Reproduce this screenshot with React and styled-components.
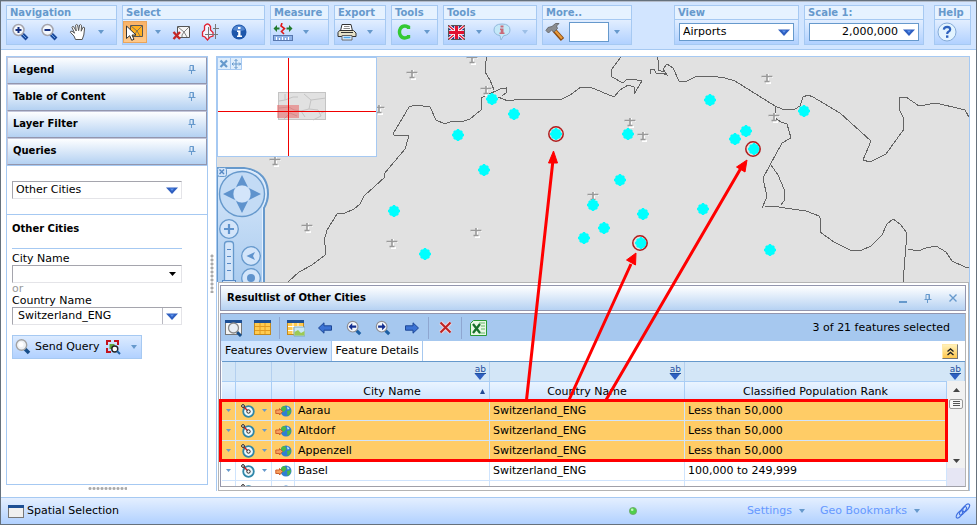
import React, { useState } from "react";
import styled, { createGlobalStyle } from "styled-components";

const GlobalStyle = createGlobalStyle`
  * {
    box-sizing: border-box;
  }
  body {
    margin: 0;
    font-family: "DejaVu Sans", Verdana, sans-serif;
    font-size: 11px;
    line-height: 14px;
    color: #000;
  }
  button, input, select {
    font: inherit;
    color: inherit;
    padding: 0;
    margin: 0;
    border-radius: 0;
  }
  svg {
    display: block;
    flex: none;
  }
`;

const Page = styled.div`
  min-height: 100vh;
  display: flex;
  flex-direction: column;
  background: #fff;
  border: 1px solid #66717c;
`;

/* ---------- top toolbar ---------- */

const Toolbar = styled.header`
  display: flex;
  gap: 5px;
  padding: 3px 5px 4px;
  background: #d2e5ff;
  border-top: 1px solid #b4bcca;
  border-bottom: 1px solid #a6c9f2;
`;
const Group = styled.section`
  min-width: ${(p) => p.$width}px;
  border: 1px solid #a6c9f2;
  margin-left: ${(p) => p.$push || "0"};
`;
const GroupTitle = styled.h2`
  display: block;
  margin: 0;
  padding: 0 3px;
  font-size: 10px;
  font-weight: bold;
  line-height: 13px;
  color: #6699cc;
  background: #e6f2ff;
  border-bottom: 1px solid #a6c9f2;
  white-space: nowrap;
`;
const Tools = styled.div`
  display: flex;
  align-items: center;
  gap: ${(p) => p.$gap || "5px"};
  height: 24px;
  padding: ${(p) => p.$pad || "0"};
  background: linear-gradient(#e2eeff, #b1d1ff);
`;
const ToolButton = styled.button`
  width: 24px;
  height: 22px;
  display: flex;
  align-items: center;
  justify-content: center;
  cursor: pointer;
  border: 1px solid ${(p) => (p.$active ? "#eaa55a" : "transparent")};
  background: ${(p) =>
    p.$active ? "linear-gradient(#f9b267, #ffc98a)" : "none"};
`;
const ArrowButton = styled.button`
  width: 12px;
  height: 22px;
  display: flex;
  align-items: center;
  justify-content: center;
  border: none;
  background: none;
  cursor: pointer;
  opacity: ${(p) => (p.disabled ? 0.45 : 1)};
`;
const MoreInput = styled.input`
  width: 40px;
  height: 20px;
  border: 1px solid #6699cc;
  background: #fff;
`;

/* ---------- drop downs ---------- */

const SelectBox = styled.span`
  position: relative;
  display: block;
  width: 100%;
  height: 18px;
  border: 1px solid #6699cc;
  background: #fff;
  ${(p) =>
    p.$inset &&
    `
    border-color: #a5a5ad #e4e4e8 #e4e4e8 #a5a5ad;
  `}
  select {
    appearance: none;
    display: block;
    width: 100%;
    height: 100%;
    border: none;
    background: transparent;
    padding: 0 20px 0 ${(p) => p.$indent || "3px"};
    text-align: ${(p) => p.$align || "left"};
    text-align-last: ${(p) => p.$align || "left"};
  }
`;
const SelectMark = styled.span`
  position: absolute;
  top: 0;
  right: 0;
  bottom: 0;
  width: 19px;
  display: flex;
  align-items: center;
  justify-content: center;
  pointer-events: none;
  border-left: 1px solid ${(p) => (p.$split ? "#b9b9c2" : "transparent")};
`;

/* ---------- middle ---------- */

const Main = styled.main`
  flex: 1;
  display: grid;
  grid-template-columns: 202px 8px 1fr;
  padding: 6px 6px 6px 5px;
`;
const SideColumn = styled.div`
  display: flex;
  flex-direction: column;
`;
const Sidebar = styled.aside`
  flex: 1;
  border: 1px solid #a6c9f2;
`;
const PanelButton = styled.button`
  display: flex;
  align-items: center;
  justify-content: space-between;
  width: 100%;
  height: 27px;
  padding: 0 10px 2px 5px;
  font-size: 10px;
  font-weight: bold;
  border: 1px solid;
  border-color: #c3c6da #9396ae #9396ae #c3c6da;
  background: linear-gradient(#fdfeff, #b4d1f2);
`;
const QueryBox = styled.div`
  padding: 15px 25px 15px 5px;
  border-top: 1px solid #a6c9f2;
`;
const QueryTitle = styled.h3`
  margin: -8px 0 4px;
  padding-bottom: 12px;
  font-size: 10px;
  line-height: 14px;
  border-bottom: 1px solid #a6c9f2;
`;
const Field = styled.label`
  display: block;
  line-height: 12px;
`;
const Or = styled.div`
  line-height: 12px;
  color: #999;
`;
const SendBar = styled.div`
  display: flex;
  align-items: center;
  justify-content: space-between;
  width: 130px;
  height: 24px;
  margin-top: 10px;
  padding: 0 1px 0 2px;
  border: 1px solid #a6c9f2;
  background: linear-gradient(#dcebff, #b1d1ff);
`;
const SendButton = styled.button`
  display: flex;
  align-items: center;
  gap: 4px;
  height: 22px;
  border: none;
  background: none;
  white-space: nowrap;
`;
const SideGrip = styled.div`
  height: 5px;
  width: 39px;
  margin: 1px auto 0;
  background: radial-gradient(circle, #aaa 1px, transparent 2px) 0 0 / 4px 5px;
`;
const ColumnGrip = styled.div`
  align-self: center;
  justify-self: center;
  width: 4px;
  height: 39px;
  background: radial-gradient(circle, #aaa 1px, transparent 2px) 0 0 / 4px 4px;
`;

/* ---------- map ---------- */

const MapPane = styled.div`
  position: relative;
  display: flex;
  flex-direction: column;
  border: 1px solid #a6c9f2;
  border-bottom: none;
`;
const MapArea = styled.div`
  position: relative;
  flex: 1;
  min-height: 225px;
  overflow: hidden;
  background: #e1e1e1;
`;
const Layer = styled.svg`
  position: absolute;
  inset: 0;
  width: 100%;
  height: 100%;
  pointer-events: none;
`;
const Overview = styled.div`
  position: absolute;
  top: 0;
  left: 0;
  width: 160px;
  height: 100px;
  border: 1px solid #a6c9f2;
  background: #fff;
`;
const NavControl = styled.div`
  position: absolute;
  top: 110px;
  left: 0;
`;

/* ---------- result list ---------- */

const ResultWindow = styled.section`
  margin-left: 1px;
  padding: 2px 2px 3px 1px;
  background: #fff;
  border: 1px solid #b4b4b4;
`;
const ResultHeader = styled.div`
  display: flex;
  align-items: center;
  justify-content: space-between;
  height: 26px;
  padding: 0 2px 0 6px;
  border: 1px solid #9396ae;
  background: linear-gradient(#fff, #b6d2f3);
`;
const ResultTitle = styled.h2`
  margin: 0;
  font-size: 10px;
`;
const WindowButtons = styled.div`
  display: flex;
  gap: 5px;
`;
const WindowButton = styled.button`
  width: 20px;
  height: 20px;
  display: flex;
  align-items: center;
  justify-content: center;
  border: none;
  background: none;
`;
const ResultBody = styled.div`
  margin-top: 2px;
  border: 1px solid;
  border-color: #9396ae #b4b4b4 #a0a0a8 #9396ae;
`;
const ResultTools = styled.div`
  display: flex;
  align-items: center;
  gap: 5px;
  height: 27px;
  padding-left: 1px;
  background: #a6c8ef;
`;
const Separator = styled.span`
  width: 1px;
  height: 22px;
  margin: 0 -1px;
  background: #8ea6d0;
`;
const Selected = styled.span`
  margin-left: auto;
  padding-right: 15px;
`;
const TabBar = styled.div`
  display: flex;
  height: 20px;
`;
const Tab = styled.button`
  height: 20px;
  padding: 0 3px 0 4px;
  border: none;
  border-right: 1px solid #a6c8ef;
  background: ${(p) => (p.$active ? "#fff" : "#d2e6ff")};
`;
const CollapseButton = styled.button`
  width: 16px;
  height: 15px;
  margin: 3px 7px 0 auto;
  display: flex;
  align-items: center;
  justify-content: center;
  border: 1px solid;
  border-color: #ffe9a8 #777 #777 #ffe9a8;
  background: linear-gradient(#fff0b8, #ffc84e);
`;
const FilterRow = styled.div`
  display: grid;
  grid-template-columns: 14px 36px 23px 195px 195px 1fr;
  height: 20px;
  margin-left: 1px;
  border-top: 1px solid #6699cc;
  background: #d3e6f7;
`;
const FilterCell = styled.div`
  display: flex;
  align-items: center;
  justify-content: flex-end;
  padding-right: 3px;
  border-right: 1px solid #b4d0ef;
`;
const FilterButton = styled.button`
  display: flex;
  flex-direction: column;
  align-items: center;
  border: none;
  background: none;
  font-size: 9px;
  line-height: 10px;
  color: #1f4f9c;
  text-decoration: underline;
`;
const Grid = styled.div`
  display: flex;
  height: 105px;
  margin-left: 1px;
  overflow: hidden;
`;
const Table = styled.table`
  flex: 1;
  align-self: flex-start;
  width: 100%;
  table-layout: fixed;
  border-collapse: separate;
  border-spacing: 0;
`;
const Th = styled.th`
  width: ${(p) => p.$width || "auto"};
  height: 20px;
  padding: 0;
  font-weight: normal;
  border: solid #a9cdf5;
  border-width: 1px 1px 0 0;
  background: linear-gradient(#eaf4ff, #cbe3ff);
`;
const HeadLabel = styled.span`
  display: flex;
  align-items: center;
  justify-content: center;
  position: relative;
`;
const SortMark = styled.svg`
  position: absolute;
  right: 4px;
`;
const Td = styled.td`
  height: 20px;
  padding: 0 0 0 ${(p) => (p.$icon ? "0" : "3px")};
  white-space: nowrap;
  border: solid #cfe4fd;
  border-width: 0 1px 1px 0;
  background: ${(p) => (p.$selected ? "#ffcc66" : "#fff")};
`;
const IconCell = styled.div`
  display: flex;
  align-items: center;
  justify-content: center;
  gap: 7px;
`;
const ScrollColumn = styled.div`
  width: 18px;
  background: #e6e6f4;
`;
const ScrollTrack = styled.div`
  display: flex;
  flex-direction: column;
  align-items: center;
  height: 87px;
  padding: 7px 0 5px;
  background: #f1f1f1;
`;
const ScrollThumb = styled.div`
  width: 14px;
  height: 10px;
  margin: 7px 0 auto;
  display: flex;
  align-items: center;
  justify-content: center;
  border: 1px solid #999;
  border-radius: 2px;
  background: #f7f7f7;
`;

/* ---------- status bar ---------- */

const StatusBar = styled.footer`
  display: flex;
  align-items: center;
  height: 27px;
  padding: 0 5px 0 7px;
  border-top: 1px solid #a6c9f2;
  background: linear-gradient(#e4efff, #b1d1ff);
`;
const StatusText = styled.span`
  flex: 9 1 0;
  padding-left: 3px;
`;
const StatusRight = styled.div`
  flex: 5 1 0;
  display: flex;
  align-items: center;
  justify-content: flex-end;
  gap: 15px;
`;
const StatusButton = styled.button`
  display: flex;
  align-items: center;
  gap: 7px;
  border: none;
  background: none;
  color: #6699ff;
  white-space: nowrap;
`;
const LinkButton = styled(StatusButton)`
  margin-left: 20px;
`;

/* ---------- icons ---------- */

const Down = ({ color = "#6699cc", w = 6, h = 4 }) => (
  <svg width={w} height={h} viewBox="0 0 10 6" preserveAspectRatio="none">
    <path d="M0 0H10L5 6Z" fill={color} />
  </svg>
);

const BigDown = () => (
  <svg width="12" height="7" viewBox="0 0 12 7">
    <path d="M0 0.5H12L6 7Z" fill="#2f5fc0" />
    <path d="M4 1.5H8L6 4Z" fill="#5d94ee" />
  </svg>
);

const Zoom = ({ plus, size = 18 }) => (
  <svg width={size} height={size} viewBox="0 0 18 18">
    <path d="M10 10L16 16" stroke="#1c4a9c" strokeWidth="4" />
    <path d="M10 10L15 15" stroke="#68a5e8" strokeWidth="1" />
    <circle cx="7.5" cy="7" r="5.5" fill="#f3f7fc" stroke="#a5a5ad" strokeWidth="1.5" />
    <path d="M4.5 7H10.5" stroke="#152f80" strokeWidth="2" />
    {plus && <path d="M7.5 4V10" stroke="#152f80" strokeWidth="2" />}
  </svg>
);

const Lens = () => (
  <svg width="16" height="16" viewBox="0 0 16 16">
    <path d="M10 10L14 14" stroke="#164d88" strokeWidth="3.5" />
    <circle cx="6.5" cy="6" r="5.2" fill="#eef1f4" stroke="#a2a2a2" strokeWidth="1.4" />
    <circle cx="6" cy="5.4" r="2.5" fill="#fff" />
  </svg>
);

const Hand = () => (
  <svg width="18" height="18" viewBox="0 0 18 18">
    <path
      d="M6.5 16.5L5 13L1.3 9.2Q1.5 7.8 3 8.2L5.6 10.2L3 4.5Q3.2 3 4.6 3.6L7.2 8L6.6 2.2Q7.4 0.8 8.6 2L9.6 7.6L10.6 2Q11.8 1 12.5 2.4L12.2 8.2L13.9 4.4Q15.2 3.6 15.6 5L14.8 12L13.2 16.5Z"
      fill="#fff"
      stroke="#555"
    />
  </svg>
);

const MapSheet = ({ fill }) => (
  <>
    <path d="M5.5 2.5H17.5V13.5H5.5Z" fill={fill} stroke="#555" />
    <path d="M6 3L12 8L17 3M12 8L10 11V13M12 8L15 13" fill="none" stroke="#666" strokeWidth="0.8" />
  </>
);

const SelectIcon = () => (
  <svg width="20" height="18" viewBox="0 0 20 18">
    <MapSheet fill="#ffb020" />
    <path d="M1.5 3L1.5 15.5L4.7 12.7L6.7 17.3L9 16.3L7 12H11Z" fill="#fff" stroke="#333" />
  </svg>
);

const UnselectIcon = () => (
  <svg width="18" height="16" viewBox="0 0 18 16">
    <MapSheet fill="#f6f6f6" />
    <path d="M1.5 8L8 15M8 8L1.5 15" stroke="#c42828" strokeWidth="2.4" />
  </svg>
);

const ShapeIcon = () => (
  <svg width="18" height="18" viewBox="0 0 18 18">
    <path
      d="M5 1.5Q6.5 0.5 8 1.5L9.5 3.5V7L12 9.5V13L9 14L6.5 17L4 14L1.5 13V9L3.5 7V3Z"
      fill="#f3f3ff"
      stroke="#e02030"
      strokeWidth="1.3"
    />
    <path d="M4 11.5H16M7.5 4V15M14.5 1V16M12 5.5H18M12 11.5H17" stroke="#777" />
  </svg>
);

const InfoIcon = () => (
  <svg width="16" height="16" viewBox="0 0 16 16">
    <circle cx="8" cy="8" r="7.5" fill="#1e57ab" />
    <path d="M2 6Q3 1.5 8 1.5Q13 1.5 14 6Q8 8 2 6Z" fill="#6a9ae0" opacity="0.7" />
    <path d="M7 3H9.5V5H7ZM6 6.5H9.5V11.5H11V13H6V11.5H7.2V8H6Z" fill="#fff" />
  </svg>
);

const MeasureIcon = () => (
  <svg width="20" height="18" viewBox="0 0 20 18">
    <path d="M0.5 5.5L4 2V4.5H6.5V6.5H4V9ZM19.5 5.5L16 2V4.5H13.5V6.5H16V9Z" fill="#217a2b" />
    <path d="M9 0L8 3L11.5 5.5L8.5 8.5L11 11" fill="none" stroke="#e01818" strokeWidth="1.6" />
    <rect x="0.5" y="12.5" width="19" height="5" fill="#8fb2e8" stroke="#5878ae" />
    <path d="M3.5 14V17M6.5 15V17M9.5 14V17M12.5 15V17M15.5 14V17" stroke="#fff" />
  </svg>
);

const PrintIcon = () => (
  <svg width="20" height="18" viewBox="0 0 20 18">
    <path d="M5 1.5H14L15.5 8H3.5Z" fill="#fff" stroke="#333" />
    <path d="M7 3.5H12.5M6.5 5.5H13" stroke="#8a8a8a" />
    <path d="M2.5 7.5H16.5L19 10V13.5H1V9.5Z" fill="#e6e1c8" stroke="#333" />
    <path d="M4 9.5H16" stroke="#333" />
    <path d="M5 12.5H15V17H5Z" fill="#e5f2ff" stroke="#666" />
    <path d="M6.5 14.5H13.5" stroke="#4ba3e6" strokeWidth="1.5" />
  </svg>
);

const RefreshC = () => (
  <svg width="14" height="16" viewBox="0 0 14 16">
    <path d="M11.5 5V3Q6 0.5 3.4 4.5Q1.5 8 3.4 11.5Q6 15.5 11.5 13V11" fill="none" stroke="#33c933" strokeWidth="3.4" />
  </svg>
);

const FlagIcon = () => (
  <svg width="17" height="15" viewBox="0 0 17 15">
    <rect x="0.5" y="0.5" width="16" height="14" fill="#1f2b86" stroke="#555" />
    <path d="M1 1L16 14M16 1L1 14" stroke="#fff" strokeWidth="3" />
    <path d="M1 1L16 14M16 1L1 14" stroke="#e01030" strokeWidth="1.2" />
    <path d="M8.5 1V14M1 7.5H16" stroke="#fff" strokeWidth="4.4" />
    <path d="M8.5 1V14M1 7.5H16" stroke="#e01030" strokeWidth="3" />
  </svg>
);

const TipIcon = () => (
  <svg width="18" height="18" viewBox="0 0 18 18">
    <path d="M9 1Q17 1 17 7Q17 12 10.5 12.8L8 17L7 12.6Q1 11.5 1 7Q1 1 9 1Z" fill="#c4e8f8" stroke="#92b9dc" />
    <path d="M7.5 2.5H10.5V4.5H7.5ZM7 5.5H10.5V9.5H11.5V11H6.5V9.5H7.7V7H7Z" fill="#c96a78" />
  </svg>
);

const HammerIcon = () => (
  <svg width="20" height="20" viewBox="0 0 20 20">
    <path d="M9 8L17.5 17.5" stroke="#8a4a12" strokeWidth="4.4" />
    <path d="M9.5 8L17 16.5" stroke="#e79a3c" strokeWidth="2.2" />
    <path d="M1 8.5L3 5.5L7 4.5L10.5 1.5H14L11.5 4L12.5 6.5L9 10L6.5 8L3.5 11Z" fill="#8b8d90" stroke="#6a6c70" />
  </svg>
);

const HelpIcon = () => (
  <svg width="20" height="20" viewBox="0 0 20 20">
    <circle cx="10" cy="10" r="9" fill="#e3f4ff" stroke="#86abd8" />
    <path d="M6.8 7.6Q7.2 4.8 10.2 4.8Q13.2 5 13.2 7.4Q13.2 8.8 11.4 9.8Q10.2 10.5 10.2 12" fill="none" stroke="#2e62bd" strokeWidth="2.2" />
    <rect x="9" y="13.4" width="2.4" height="2.4" fill="#2e62bd" />
  </svg>
);

const Pin = () => (
  <svg width="8" height="9" viewBox="0 0 8 9">
    <path d="M2 5.5V0.5H5.5V5.5M5 0.5V5.5M0.5 5.5H7.5M3.5 6V9" fill="none" stroke="#6699cc" />
  </svg>
);

const TableIcon = ({ lens, chart }) => (
  <svg width="18" height="18" viewBox="0 0 18 18">
    <rect x="0.5" y="1.5" width="16" height="14" fill={lens ? "#f5f5f5" : "#ffcb50"} stroke={lens ? "#777" : "#c58a1c"} />
    <rect x="0" y="1" width="17" height="3" fill="#1d4f94" />
    {!lens && <path d="M1 7.5H16M1 11.5H16M6 4V15M11 4V15" stroke={chart ? "#fff" : "#e39a20"} />}
    {chart && <path d="M7 8H18V17H7Z" fill="#c9e7f6" stroke="#7fa9bd" />}
    {chart && <path d="M7.5 16.5V13L11 11L14 14L17.5 12V16.5Z" fill="#9cca55" />}
    {lens && <path d="M12 13L16 17" stroke="#164d88" strokeWidth="3" />}
    {lens && <circle cx="8.5" cy="9" r="5" fill="#e8eef5" stroke="#8a8a8a" strokeWidth="1.3" />}
  </svg>
);

const ArrowIcon = ({ right }) => (
  <svg width="14" height="12" viewBox="0 0 14 12">
    <path
      d={right ? "M13.5 6L8 0.8V3.8H0.5V8.2H8V11.2Z" : "M0.5 6L6 0.8V3.8H13.5V8.2H6V11.2Z"}
      fill="#3b72d4"
      stroke="#1d4796"
    />
  </svg>
);

const ZoomArrow = ({ right }) => (
  <svg width="16" height="16" viewBox="0 0 18 18">
    <path d="M11 11L16 16" stroke="#1c5fa4" strokeWidth="3.5" />
    <circle cx="7.5" cy="7.5" r="6" fill="#f3f7fc" stroke="#8f8f95" strokeWidth="1.3" />
    <path d={right ? "M12 7.5L8 3.5V6.3H3.5V8.7H8V11.5Z" : "M3 7.5L7 3.5V6.3H11.5V8.7H7V11.5Z"} fill="#152f90" />
  </svg>
);

const CrossIcon = () => (
  <svg width="13" height="13" viewBox="0 0 13 13">
    <path d="M1.5 1.5L11.5 11.5M11.5 1.5L1.5 11.5" stroke="#ecd4dc" strokeWidth="4" />
    <path d="M1.5 1.5L11.5 11.5M11.5 1.5L1.5 11.5" stroke="#bf2222" strokeWidth="2" />
  </svg>
);

const ExcelIcon = () => (
  <svg width="18" height="16" viewBox="0 0 18 16">
    <path d="M4.5 0.5H17.5V15.5H1.5V3.5Z" fill="#e9f7e4" stroke="#2a9a35" />
    <path d="M10 3H16M12 6H16M12 9H16M10 13H16" stroke="#63b768" />
    <path d="M4 4L11 13M11 4L4 13" stroke="#17702a" strokeWidth="2.3" />
  </svg>
);

const TargetIcon = () => (
  <svg width="14" height="14" viewBox="0 0 14 14">
    <circle cx="7.5" cy="7.5" r="5.3" fill="#edf8fc" stroke="#2f87a8" strokeWidth="1.8" />
    <path d="M2 2L7.5 7.5" stroke="#c42020" strokeWidth="1.4" />
    <circle cx="2" cy="2" r="1.4" fill="#fff" stroke="#222" />
    <circle cx="7.5" cy="7.5" r="1.7" fill="#fff" stroke="#222" />
  </svg>
);

const GlobeIcon = () => (
  <svg width="17" height="14" viewBox="0 0 17 14">
    <circle cx="11" cy="7" r="5.5" fill="#2f7fd2" />
    <path d="M8 2Q11 2 11.5 5L9 8Q6 7 6 4ZM12 7L16 6Q16 10 12.5 12Z" fill="#4cb648" />
    <path d="M12 2.5Q14 3 14.5 5L12.5 5.5Z" fill="#bfe3fa" />
    <path d="M7.5 7.5L4.5 4.5V6H0.8V9.5H4.5V11Z" fill="#f6a060" stroke="#d0602a" />
  </svg>
);

const QueryMapIcon = () => (
  <svg width="15" height="15" viewBox="0 0 15 15">
    <path d="M1 5V1H5M8 1H12V5M1 8V12H5" fill="none" stroke="#c3131d" strokeWidth="2" />
    <rect x="3.5" y="4" width="5" height="5" fill="#61a53c" />
    <circle cx="8.8" cy="9" r="3" fill="#fff" stroke="#222" strokeWidth="1.4" />
    <path d="M11 11L14 14" stroke="#1c5fa4" strokeWidth="2" />
  </svg>
);

const WindowIcon = () => (
  <svg width="16" height="13" viewBox="0 0 16 13">
    <rect x="0.5" y="0.5" width="15" height="12" fill="#f0f0f0" stroke="#777" />
    <rect x="0" y="0" width="16" height="3" fill="#1d4f94" />
  </svg>
);

const LinkIcon = () => (
  <svg width="16" height="16" viewBox="0 0 16 16">
    <g fill="none" stroke="#3f6fe0" strokeWidth="1.2">
      <ellipse cx="11.2" cy="4.8" rx="2.2" ry="4.6" transform="rotate(38 11.2 4.8)" />
      <ellipse cx="8" cy="7.8" rx="2" ry="5" transform="rotate(38 8 7.8)" />
      <ellipse cx="4.4" cy="11.4" rx="2" ry="4.4" transform="rotate(38 4.4 11.4)" />
    </g>
  </svg>
);

/* ---------- map data ---------- */

const cities = [
  [492, 99], [514, 114], [458, 135], [556, 134], [484, 170], [394, 211],
  [425, 254], [628, 134], [620, 180], [593, 205], [643, 214], [604, 228],
  [584, 238], [641, 243], [710, 100], [804, 111], [746, 131], [735, 139],
  [754, 149], [703, 209], [770, 250],
];

const picked = [[556, 134], [640, 243], [753, 149]];

const airports = [
  [412, 73], [472, 58], [486, 89], [379, 108], [275, 160], [307, 226],
  [392, 242], [476, 231], [630, 121], [643, 135], [593, 195], [767, 77],
  [774, 116],
];

const borders = [
  "M288 282L299 272L312 265L325 255L326 248L324 241L327 230L337 214L345 213L354 209L360 204L364 196L385 177L384 174L405 149L409 136L394 135L393 134L409 107L415 105L430 107L436 120L445 124L452 121H464L470 119L481 110V98L487 95L500 89L506 88V93L502 96",
  "M487 57L485 65V72L490 80L494 90",
  "M498 97L508 101L520 99H562L570 95L581 87H590L614 97L620 90L628 85L634 87V94L642 81L632 79H627L623 83L612 77L611 70L621 57",
  "M657 57L658 60V70L664 72",
  "M650 74V70L654 69L656 73H662L667 75L663 69L667 64L673 68L679 81L685 82L697 76H710L725 78L735 81L775 106L782 109H795L800 106L803 97L808 95L813 97L840 113L871 141L863 160L870 162L886 154L904 129L903 117L899 109V98L906 97L919 106L936 103L965 110L970 119",
  "M775 106V118L781 122L787 124L791 138L782 143L770 165L763 178L767 197L762 208",
  "M771 165L778 175L784 189V201L781 205",
  "M765 206H773L785 208L806 211L819 216L821 220L820 232L834 242L850 250L860 251L871 246L882 235L887 224L893 219L900 224L907 233L903 282",
  "M908 249L918 251L926 248L936 246L946 252L952 261L965 267H970",
];

const Airport = ({ x, y }) => (
  <g transform={`translate(${x} ${y})`}>
    <path d="M-5 0H6M1 -3V6M-1 6H4" stroke="#fff" strokeWidth="2" />
    <path d="M-5.5 -0.5H5.5M0 -3V5M-2.5 4.5H2.5" stroke="#999" strokeWidth="1.6" />
  </g>
);

const MapLayer = () => (
  <Layer>
    <g transform="translate(-217 -57)">
      <g fill="none" stroke="#636363" shapeRendering="crispEdges">
        {borders.map((d) => (
          <path key={d} d={d} />
        ))}
      </g>
      {airports.map(([x, y]) => (
        <Airport key={`${x}-${y}`} x={x} y={y} />
      ))}
      {cities.map(([x, y]) => (
        <g key={`${x}-${y}`} fill="cyan">
          <circle cx={x} cy={y} r="5.2" />
          <path
            d="M-6 0L6 0M0 -6L0 6M-4 -4L4 4M4 -4L-4 4"
            stroke="cyan"
            strokeWidth="2.4"
            transform={`translate(${x} ${y})`}
          />
        </g>
      ))}
      {picked.map(([x, y]) => (
        <circle key={x} cx={x} cy={y} r="7.2" fill="none" stroke="#b01c1c" strokeWidth="1.5" />
      ))}
    </g>
  </Layer>
);

const OverviewMap = () => (
  <Overview>
    <Layer>
      <rect x="60.5" y="34.5" width="47" height="27" fill="#e1e1e1" stroke="#c4c4c4" />
      <path
        d="M61 43L67 42V36M67 42L75 39H80M86 36L93 42L91 51L83 53M93 42L108 40M91 51L100 52L103 58L95 62M103 55L108 53M61 50L71 49L76 52L83 53L87 59M66 61L72 55L79 58"
        fill="none"
        stroke="#c4c4c4"
      />
      <rect x="59" y="47" width="22" height="13" fill="#f03030" opacity="0.38" />
      <path d="M0 53.5H158M70.5 0V98" stroke="#f00000" />
      <path d="M0 0H24V12H0Z" fill="#e0eefc" />
      <path d="M0 11.5H23.5V0M12.5 0V11" fill="none" stroke="#a6c9f2" />
      <path d="M2.5 2.5L9 9M9 2.5L2.5 9" stroke="#6699cc" strokeWidth="2.2" />
      <path d="M14 6H23M18 1.5V10.5M16.5 3L18 1.5L19.5 3M16.5 9L18 10.5L19.5 9M15.5 4.5L14 6L15.5 7.5M21 4.5L22.5 6L21 7.5" fill="none" stroke="#6699cc" />
    </Layer>
  </Overview>
);

const PanZoom = () => (
  <NavControl>
    <svg width="54" height="115" viewBox="0 0 54 115">
      <defs>
        <linearGradient id="pz" x1="0" y1="0" x2="0" y2="1">
          <stop offset="0" stopColor="#d8e8fa" />
          <stop offset="1" stopColor="#a9cbef" />
        </linearGradient>
      </defs>
      <path d="M0 1H27Q51 4 51 27Q51 34 47 41V120H0Z" fill="url(#pz)" stroke="#6699cc" strokeWidth="2" />
      <path d="M0 2.5H27Q49 5 49 27Q49 34 45.5 40.5V120" fill="none" stroke="#e4f0ff" />
      <circle cx="25" cy="27" r="22.5" fill="#c3dbf5" stroke="#6699cc" strokeWidth="1.4" />
      <circle cx="25" cy="27" r="9" fill="#d3e5fa" stroke="#b3cfee" />
      <path d="M25 8L31 20Q25 16.5 19 20ZM25 46L31 34Q25 37.5 19 34ZM6 27L18 21Q14.5 27 18 33ZM44 27L32 21Q35.5 27 32 33Z" fill="#5f93cd" />
      <rect x="0.5" y="0.5" width="9" height="9" rx="2" fill="#cfe2f8" stroke="#6699cc" />
      <path d="M2.5 2.5L7 7M7 2.5L2.5 7" stroke="#5588c4" strokeWidth="1.4" />
      <g fill="#d3e5fa" stroke="#6699cc" strokeWidth="1.3">
        <circle cx="12" cy="62" r="9.3" />
        <circle cx="34" cy="89" r="9.3" />
        <circle cx="34" cy="111" r="9.3" />
        <rect x="7.5" y="74.5" width="9" height="45" rx="3" />
      </g>
      <path d="M12 57V67M7 62H17" stroke="#5f93cd" strokeWidth="2.2" />
      <path d="M10 82.5H14M10 89.5H14M10 96.5H14M10 103.5H14" stroke="#5588c4" />
      <rect x="5.5" y="113.5" width="13" height="5" fill="#d3e5fa" stroke="#5588c4" />
      <path d="M29.5 89L38 85L36 89L38 93Z" fill="#5f93cd" />
      <circle cx="34" cy="111" r="4" fill="#5f93cd" />
    </svg>
  </NavControl>
);

/* lines drawn over the map and the result list */
const Annotations = () => (
  <Layer>
    <g transform="translate(-217 -57)" stroke="#ff0000" fill="#ff0000">
      <rect x="220.5" y="400.5" width="726" height="60" fill="none" strokeWidth="3" />
      <path d="M526.5 400L553 160M569 400L631 264M606 400L741 168" strokeWidth="3" fill="none" />
      <path d="M553.5 151L557.5 163H548.5ZM636 253L635.5 265L626.5 260ZM747 160L745 172L736.5 167Z" strokeWidth="1" />
    </g>
  </Layer>
);

const rows = [
  { city: "Aarau", country: "Switzerland_ENG", rank: "Less than 50,000", selected: true },
  { city: "Altdorf", country: "Switzerland_ENG", rank: "Less than 50,000", selected: true },
  { city: "Appenzell", country: "Switzerland_ENG", rank: "Less than 50,000", selected: true },
  { city: "Basel", country: "Switzerland_ENG", rank: "100,000 to 249,999" },
  { city: "", country: "", rank: "" },
];

const panels = ["Legend", "Table of Content", "Layer Filter", "Queries"];

const Filter = () => (
  <FilterButton type="button">
    ab
    <Down color="#2f5fc0" w={10} h={6} />
  </FilterButton>
);

const ToolArrow = (props) => (
  <ArrowButton type="button" aria-label="More options" {...props}>
    <Down />
  </ArrowButton>
);

const ResultList = () => {
  const [tab, setTab] = useState("details");

  return (
    <ResultWindow>
      <ResultHeader>
        <ResultTitle>Resultlist of Other Cities</ResultTitle>
        <WindowButtons>
          <WindowButton aria-label="Minimize">
            <svg width="8" height="9"><path d="M0 8H8" stroke="#6699cc" strokeWidth="2" /></svg>
          </WindowButton>
          <WindowButton aria-label="Pin"><Pin /></WindowButton>
          <WindowButton aria-label="Close">
            <svg width="8" height="8"><path d="M0.5 0.5L7.5 7.5M7.5 0.5L0.5 7.5" stroke="#6699cc" strokeWidth="1.4" /></svg>
          </WindowButton>
        </WindowButtons>
      </ResultHeader>
      <ResultBody>
        <ResultTools>
          <ToolButton aria-label="Zoom to table"><TableIcon lens /></ToolButton>
          <ToolButton aria-label="Table"><TableIcon /></ToolButton>
          <Separator />
          <ToolButton aria-label="Chart"><TableIcon chart /></ToolButton>
          <ToolButton aria-label="Back"><ArrowIcon /></ToolButton>
          <ToolButton aria-label="Zoom back"><ZoomArrow /></ToolButton>
          <ToolButton aria-label="Zoom next"><ZoomArrow right /></ToolButton>
          <ToolButton aria-label="Next"><ArrowIcon right /></ToolButton>
          <Separator />
          <ToolButton aria-label="Remove"><CrossIcon /></ToolButton>
          <Separator />
          <ToolButton aria-label="Excel"><ExcelIcon /></ToolButton>
          <Selected>3 of 21 features selected</Selected>
        </ResultTools>
        <TabBar>
          <Tab $active={tab === "overview"} onClick={() => setTab("overview")}>
            Features Overview
          </Tab>
          <Tab $active={tab === "details"} onClick={() => setTab("details")}>
            Feature Details
          </Tab>
          <CollapseButton aria-label="Collapse">
            <svg width="7" height="8" viewBox="0 0 7 8">
              <path d="M0.5 3.5L3.5 1L6.5 3.5M0.5 7L3.5 4.5L6.5 7" fill="none" stroke="#222" strokeWidth="1.4" />
            </svg>
          </CollapseButton>
        </TabBar>
        <FilterRow>
          <FilterCell />
          <FilterCell />
          <FilterCell />
          <FilterCell><Filter /></FilterCell>
          <FilterCell><Filter /></FilterCell>
          <FilterCell><Filter /></FilterCell>
        </FilterRow>
        <Grid>
          <Table>
            <thead>
              <tr>
                <Th $width="14px" />
                <Th $width="36px" />
                <Th $width="23px" />
                <Th $width="195px">
                  <HeadLabel>
                    City Name
                    <SortMark width="5" height="5"><path d="M0 5H5L2.5 0Z" fill="#234a94" /></SortMark>
                  </HeadLabel>
                </Th>
                <Th $width="195px">Country Name</Th>
                <Th>Classified Population Rank</Th>
              </tr>
            </thead>
            <tbody>
              {rows.map((row, i) => (
                <tr key={i}>
                  <Td $icon $selected={row.selected}><IconCell><Down w={5} h={3} /></IconCell></Td>
                  <Td $icon $selected={row.selected}><IconCell><TargetIcon /><Down w={5} h={3} /></IconCell></Td>
                  <Td $icon $selected={row.selected}><IconCell><GlobeIcon /></IconCell></Td>
                  <Td $selected={row.selected}>{row.city}</Td>
                  <Td $selected={row.selected}>{row.country}</Td>
                  <Td $selected={row.selected}>{row.rank}</Td>
                </tr>
              ))}
            </tbody>
          </Table>
          <ScrollColumn>
            <ScrollTrack>
              <svg width="7" height="4"><path d="M0 4H7L3.5 0Z" fill="#444" /></svg>
              <ScrollThumb>
                <svg width="7" height="6"><path d="M0 0.5H7M0 2.5H7M0 4.5H7" stroke="#555" /></svg>
              </ScrollThumb>
              <Down color="#444" w={7} h={4} />
            </ScrollTrack>
          </ScrollColumn>
        </Grid>
      </ResultBody>
    </ResultWindow>
  );
};

const App = () => {
  const [more, setMore] = useState("");

  return (
    <Page>
      <GlobalStyle />
      <Toolbar>
        <Group $width={111}>
          <GroupTitle>Navigation</GroupTitle>
          <Tools $pad="0 0 0 1px">
            <ToolButton aria-label="Zoom in"><Zoom plus /></ToolButton>
            <ToolButton aria-label="Zoom out"><Zoom /></ToolButton>
            <ToolButton aria-label="Pan"><Hand /></ToolButton>
            <ToolArrow />
          </Tools>
        </Group>
        <Group $width={143}>
          <GroupTitle>Select</GroupTitle>
          <Tools>
            <ToolButton $active aria-label="Select"><SelectIcon /></ToolButton>
            <ToolArrow />
            <ToolButton aria-label="Clear selection"><UnselectIcon /></ToolButton>
            <ToolButton aria-label="Select by shape"><ShapeIcon /></ToolButton>
            <ToolButton aria-label="Info"><InfoIcon /></ToolButton>
          </Tools>
        </Group>
        <Group $width={59}>
          <GroupTitle>Measure</GroupTitle>
          <Tools>
            <ToolButton aria-label="Measure"><MeasureIcon /></ToolButton>
            <ToolArrow />
          </Tools>
        </Group>
        <Group $width={52}>
          <GroupTitle>Export</GroupTitle>
          <Tools>
            <ToolButton aria-label="Print"><PrintIcon /></ToolButton>
            <ToolArrow />
          </Tools>
        </Group>
        <Group $width={47}>
          <GroupTitle>Tools</GroupTitle>
          <Tools>
            <ToolButton aria-label="Refresh"><RefreshC /></ToolButton>
            <ToolArrow />
          </Tools>
        </Group>
        <Group $width={94}>
          <GroupTitle>Tools</GroupTitle>
          <Tools>
            <ToolButton aria-label="Language"><FlagIcon /></ToolButton>
            <ToolArrow />
            <ToolButton aria-label="Map tip"><TipIcon /></ToolButton>
            <ToolArrow disabled />
          </Tools>
        </Group>
        <Group $width={90}>
          <GroupTitle>More..</GroupTitle>
          <Tools $gap="2px">
            <ToolButton aria-label="Build"><HammerIcon /></ToolButton>
            <MoreInput
              aria-label="More"
              value={more}
              onChange={(e) => setMore(e.target.value)}
            />
            <ToolArrow />
          </Tools>
        </Group>
        <Group $width={125} $push="auto">
          <GroupTitle as="label" htmlFor="view">View</GroupTitle>
          <Tools $pad="0 4px">
            <SelectBox>
              <select id="view"><option>Airports</option></select>
              <SelectMark><BigDown /></SelectMark>
            </SelectBox>
          </Tools>
        </Group>
        <Group $width={120}>
          <GroupTitle as="label" htmlFor="scale">Scale 1:</GroupTitle>
          <Tools $pad="0 4px">
            <SelectBox $align="right">
              <select id="scale"><option>2,000,000</option></select>
              <SelectMark><BigDown /></SelectMark>
            </SelectBox>
          </Tools>
        </Group>
        <Group $width={37} $push="5px">
          <GroupTitle>Help</GroupTitle>
          <Tools>
            <ToolButton aria-label="Help"><HelpIcon /></ToolButton>
          </Tools>
        </Group>
      </Toolbar>

      <Main>
        <SideColumn>
          <Sidebar>
            {panels.map((name) => (
              <PanelButton key={name} type="button">
                {name}
                <Pin />
              </PanelButton>
            ))}
            <QueryBox>
              <SelectBox $inset>
                <select aria-label="Query layer"><option>Other Cities</option></select>
                <SelectMark><BigDown /></SelectMark>
              </SelectBox>
            </QueryBox>
            <QueryBox>
              <QueryTitle>Other Cities</QueryTitle>
              <Field htmlFor="city">City Name</Field>
              <SelectBox $inset>
                <select id="city"><option></option></select>
                <SelectMark><Down color="#000" w={7} h={4} /></SelectMark>
              </SelectBox>
              <Or>or</Or>
              <Field htmlFor="country">Country Name</Field>
              <SelectBox $inset $indent="5px">
                <select id="country"><option>Switzerland_ENG</option></select>
                <SelectMark $split><BigDown /></SelectMark>
              </SelectBox>
              <SendBar>
                <SendButton type="button">
                  <Lens />
                  Send Query
                </SendButton>
                <QueryMapIcon />
                <ToolArrow />
              </SendBar>
            </QueryBox>
          </Sidebar>
          <SideGrip />
        </SideColumn>
        <ColumnGrip />
        <MapPane>
          <MapArea>
            <MapLayer />
            <OverviewMap />
            <PanZoom />
          </MapArea>
          <ResultList />
          <Annotations />
        </MapPane>
      </Main>

      <StatusBar>
        <WindowIcon />
        <StatusText>Spatial Selection</StatusText>
        <svg width="8" height="8" viewBox="0 0 8 8">
          <circle cx="4" cy="4" r="3.6" fill="#4fd04a" stroke="#6ea56c" strokeWidth="0.8" />
          <circle cx="3.2" cy="2.8" r="1.3" fill="#c4f5bd" />
        </svg>
        <StatusRight>
          <StatusButton>Settings <Down /></StatusButton>
          <StatusButton>Geo Bookmarks <Down /></StatusButton>
          <LinkButton aria-label="Link"><LinkIcon /></LinkButton>
        </StatusRight>
      </StatusBar>
    </Page>
  );
};

export default App;
